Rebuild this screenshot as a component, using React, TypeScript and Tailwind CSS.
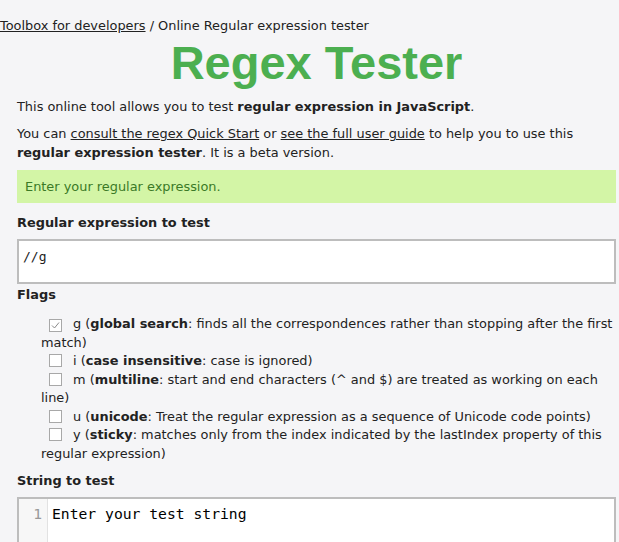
import React from 'react';

type Flag = {
  letter: string;
  name: string;
  desc: string;
  checked: boolean;
};

const flags: Flag[] = [
  { letter: 'g', name: 'global search', desc: 'finds all the correspondences rather than stopping after the first match)', checked: true },
  { letter: 'i', name: 'case insensitive', desc: 'case is ignored)', checked: false },
  { letter: 'm', name: 'multiline', desc: 'start and end characters (^ and $) are treated as working on each line)', checked: false },
  { letter: 'u', name: 'unicode', desc: 'Treat the regular expression as a sequence of Unicode code points)', checked: false },
  { letter: 'y', name: 'sticky', desc: 'matches only from the index indicated by the lastIndex property of this regular expression)', checked: false },
];

const FlagBox: React.FC<{ checked: boolean }> = ({ checked }) => (
  <span className="inline-flex w-[13px] h-[13px] border border-[#a8a8a8] bg-white items-center justify-center align-[-2px] ml-[8px] mr-[11px]">
    {checked && (
      <svg width="9" height="9" viewBox="0 0 9 9">
        <path d="M1 4.5 L3.5 7 L8 1.5" fill="none" stroke="#8a8a8a" strokeWidth="1" />
      </svg>
    )}
  </span>
);

export default function App() {
  return (
    <div
      className="min-h-[542px] bg-[#f5f5f7] text-[#222] text-[13px] leading-[19px] overflow-hidden"
      style={{ fontFamily: '"DejaVu Sans", Verdana, sans-serif' }}
    >
      <div className="pt-[16px] pb-[4px] text-[12.9px]">
        <a className="underline">Toolbox for developers</a> / Online Regular expression tester
      </div>

      <h1
        className="text-center pl-[17px] pr-[3px] text-[47px] leading-[48px] font-bold text-[#4caf50]"
        style={{ fontFamily: '"Liberation Sans", Arial, sans-serif' }}
      >
        Regex Tester
      </h1>

      <div className="pl-[17px] pr-[3px] text-[12.9px]">
        <p className="mt-[10px]">
          This online tool allows you to test <b>regular expression in JavaScript</b>.
        </p>
        <p className="mt-[8px]">
          You can <a className="underline">consult the regex Quick Start</a> or{' '}
          <a className="underline">see the full user guide</a> to help you to use this{' '}
          <b>regular expression tester</b>. It is a beta version.
        </p>

        <div className="mt-[8px] h-[33px] bg-[#d3f5a6] text-[#3b7a27] px-[8px] flex items-center">
          Enter your regular expression.
        </div>

        <h3 className="mt-[10px] font-bold">Regular expression to test</h3>
        <div
          className="mt-[7px] h-[45px] border-2 border-[#bdbdbd] bg-white px-[4px] pt-[6px] text-[13px]"
          style={{ fontFamily: '"DejaVu Sans Mono", monospace' }}
        >
          //g
        </div>

        <h3 className="mt-[1px] font-bold">Flags</h3>
        <div className="pl-[24px] mt-[11px] leading-[18.5px]">
          {flags.map((f) => (
            <div key={f.letter}>
              <FlagBox checked={f.checked} />
              {f.letter} (<b>{f.name}</b>: {f.desc}
            </div>
          ))}
        </div>

        <h3 className="mt-[8px] font-bold">String to test</h3>
        <div className="mt-[7px] h-[60px] border-2 border-[#bdbdbd] bg-white flex">
          <div
            className="w-[29px] bg-[#f7f7f7] border-r border-[#e2e2e2] text-right pr-[5px] pt-[5px] text-[#999] text-[14.7px]"
            style={{ fontFamily: '"DejaVu Sans Mono", monospace' }}
          >
            1
          </div>
          <div
            className="pl-[4px] pt-[5px] text-[14.7px] text-black"
            style={{ fontFamily: '"DejaVu Sans Mono", monospace' }}
          >
            Enter your test string
          </div>
        </div>
      </div>
    </div>
  );
}
